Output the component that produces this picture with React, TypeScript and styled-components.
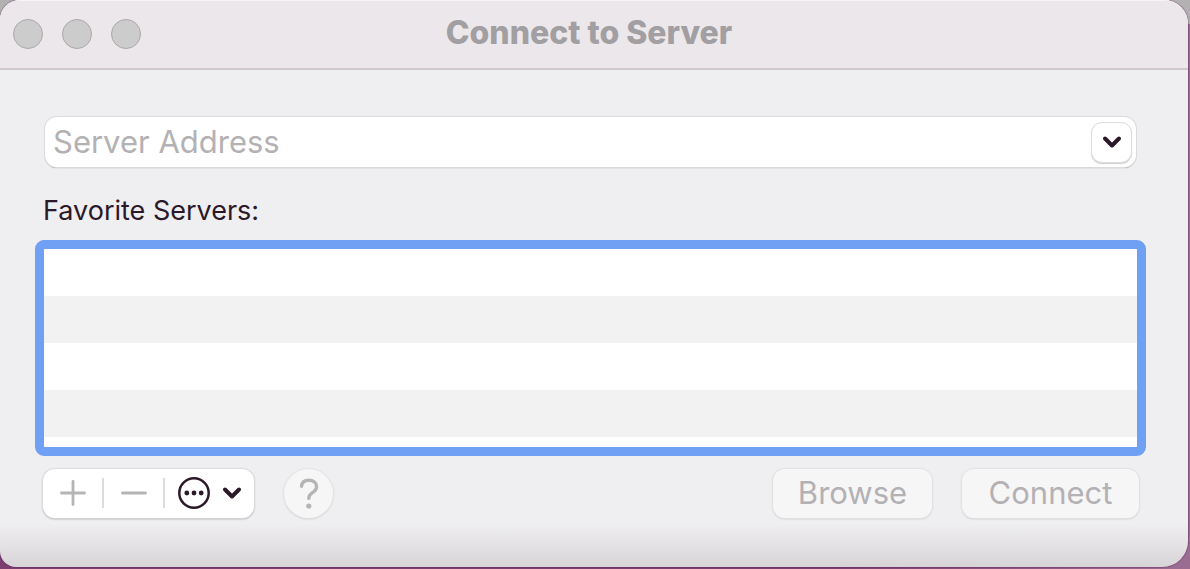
import React from "react";
import styled, { createGlobalStyle } from "styled-components";

const GlobalStyle = createGlobalStyle`
  *, *::before, *::after { box-sizing: border-box; }
  body {
    margin: 0;
    font-family: Inter, "Liberation Sans", sans-serif;
    background: #7d3f71;
  }
  button, input { font: inherit; }
`;

const Desktop = styled.div`
  min-height: 100vh;
  display: flex;
  flex-direction: column;
  padding: 0 2px 2px 0;
  overflow: hidden;
  background: linear-gradient(to right, #7d3f71 70%, transparent 98%) 0 100% / 100% 40px no-repeat,
    linear-gradient(#b4b1b3 24px, #9b6c92 24px);
`;

const Window = styled.main`
  flex: 1;
  display: flex;
  flex-direction: column;
  border-radius: 20px 24px 26px 16px;
  overflow: hidden;
  background: linear-gradient(to top, #d6d4d6, #e3e1e3 20px, #efeef0 44px);
  box-shadow: 0 0 1px 1px rgba(90, 30, 85, 0.35);
`;

const TitleBar = styled.header`
  display: grid;
  grid-template-columns: 1fr auto 1fr;
  align-items: center;
  height: 70px;
  padding: 0 23px 2px 13px;
  background: #ece7eb;
  border-top: 1px solid #f7f4f6;
  border-bottom: 2px solid #cfc9ce;
`;

const Lights = styled.div`
  display: flex;
  gap: 19px;
`;

const Light = styled.button`
  width: 30px;
  height: 30px;
  padding: 0;
  border: 1px solid #a9a7a9;
  border-radius: 50%;
  background: #cdcccd;
`;

const Title = styled.h1`
  margin: 0;
  padding-bottom: 2px;
  font-size: 32px;
  line-height: 40px;
  font-weight: 800;
  color: #a29fa2;
`;

const Content = styled.form`
  padding: 47px 49px 48px 43px;
`;

const AddressField = styled.div`
  display: flex;
  align-items: center;
  height: 50px;
  margin: 0 3px 0 2px;
  padding: 0 4px 0 8px;
  border-radius: 12px;
  background: #fff;
  box-shadow: 0 0 0 1px #dcdadc, 0 1px 1px 0 #807e80;
`;

const AddressInput = styled.input`
  flex: 1;
  min-width: 0;
  height: 40px;
  padding: 0 0 2px;
  border: 0;
  outline: 0;
  background: transparent;
  font-size: 31px;
  color: #2b1828;
  &::placeholder { color: #b3b1b3; opacity: 1; }
`;

const MenuButton = styled.button`
  display: grid;
  place-items: center;
  width: 41px;
  height: 41px;
  padding: 0;
  border: 1px solid #dedcde;
  border-radius: 11px;
  background: #fff;
  box-shadow: 0 1px 1px #d0ced0;
`;

const ListLabel = styled.h2`
  margin: 28px 0 13px;
  font-size: 27px;
  line-height: 32px;
  font-weight: 400;
  color: #2b1828;
`;

const ServerList = styled.ul`
  height: 216px;
  margin: 0 -7px 0 -8px;
  padding: 0;
  list-style: none;
  overflow: hidden;
  border: 9px solid #70a0f4;
  border-radius: 9px;
  background: #fff;
`;

const ServerRow = styled.li`
  height: 47px;
  background: #fff;
  &:nth-child(even) { background: #f3f2f3; }
`;

const Footer = styled.div`
  display: flex;
  align-items: center;
  margin-top: 13px;
`;

const Segments = styled.div`
  display: flex;
  align-items: center;
  height: 49px;
  padding-bottom: 2px;
  border-radius: 12px;
  background: #fff;
  box-shadow: 0 0 1px 1px #dcdadc, 0 1px 2px #908d90;
`;

const Segment = styled.button<{ $width: number }>`
  display: flex;
  align-items: center;
  justify-content: center;
  gap: 12px;
  width: ${(p) => p.$width}px;
  height: 30px;
  padding: 0;
  border: 0;
  background: transparent;
  & + & { border-left: 2px solid #dddbdd; }
`;

const HelpButton = styled.button`
  width: 49px;
  height: 49px;
  margin: 0 auto 0 30px;
  padding: 0;
  border: 0;
  border-radius: 50%;
  background: #f7f6f7;
  box-shadow: 0 0 1px 1px #e3e1e3, 0 1px 2px #c4c2c4;
  display: grid;
  place-items: center;
`;

const PushButton = styled.button<{ $width: number }>`
  width: ${(p) => p.$width}px;
  height: 49px;
  margin-left: 30px;
  padding: 0 0 2px;
  border: 0;
  border-radius: 12px;
  background: #f7f6f7;
  box-shadow: 0 0 1px 1px #e3e1e3, 0 1px 2px #c4c2c4;
  font-size: 31px;
  line-height: 40px;
  color: #b3b1b3;
`;

const Chevron = () => (
  <svg width="20" height="14" viewBox="0 0 20 14" fill="none" stroke="#2b1828" strokeWidth="4" strokeLinecap="round" strokeLinejoin="round" aria-hidden="true">
    <path d="M3 3.5 10 10.5 17 3.5" />
  </svg>
);

const App = () => (
  <>
    <GlobalStyle />
    <Desktop>
      <Window>
        <TitleBar>
          <Lights>
            <Light type="button" aria-label="Close" />
            <Light type="button" aria-label="Minimize" />
            <Light type="button" aria-label="Zoom" />
          </Lights>
          <Title>Connect to Server</Title>
        </TitleBar>
        <Content onSubmit={(e) => e.preventDefault()}>
          <AddressField>
            <AddressInput type="text" placeholder="Server Address" aria-label="Server Address" />
            <MenuButton type="button" aria-label="Recent servers">
              <Chevron />
            </MenuButton>
          </AddressField>
          <ListLabel id="favorites">Favorite Servers:</ListLabel>
          <ServerList aria-labelledby="favorites">
            {[0, 1, 2, 3].map((row) => (
              <ServerRow key={row} />
            ))}
          </ServerList>
          <Footer>
            <Segments>
              <Segment type="button" $width={59} disabled aria-label="Add">
                <svg width="26" height="26" viewBox="0 0 26 26" stroke="#b6b4b6" strokeWidth="2.8" strokeLinecap="round" aria-hidden="true">
                  <path d="M13 1.5V24.5M1.5 13H24.5" />
                </svg>
              </Segment>
              <Segment type="button" $width={61} disabled aria-label="Remove">
                <svg width="26" height="26" viewBox="0 0 26 26" stroke="#b6b4b6" strokeWidth="2.8" strokeLinecap="round" aria-hidden="true">
                  <path d="M1.5 13H24.5" />
                </svg>
              </Segment>
              <Segment type="button" $width={91} aria-label="Actions">
                <svg width="32" height="32" viewBox="0 0 32 32" aria-hidden="true">
                  <circle cx="16" cy="16" r="14.7" fill="none" stroke="#2b1828" strokeWidth="2.5" />
                  <g fill="#2b1828">
                    <circle cx="8.8" cy="16" r="2.4" />
                    <circle cx="16" cy="16" r="2.4" />
                    <circle cx="23.2" cy="16" r="2.4" />
                  </g>
                </svg>
                <Chevron />
              </Segment>
            </Segments>
            <HelpButton type="button" disabled aria-label="Help">
              <svg width="20" height="32" viewBox="0 0 20 32" fill="none" stroke="#b6b4b6" strokeWidth="3.4" strokeLinecap="round" strokeLinejoin="round" aria-hidden="true">
                <path d="M2.5 8.2C3 4.4 5.8 2.3 9.8 2.3C14.4 2.3 17.6 4.8 17.6 8.6C17.6 11.8 15.6 13.4 13.2 14.9C10.8 16.4 9.8 17.6 9.8 20.4" />
                <circle cx="9.8" cy="28" r="2.6" fill="#b6b4b6" stroke="none" />
              </svg>
            </HelpButton>
            <PushButton type="button" $width={159} disabled>Browse</PushButton>
            <PushButton type="submit" $width={177} disabled>Connect</PushButton>
          </Footer>
        </Content>
      </Window>
    </Desktop>
  </>
);

export default App;
